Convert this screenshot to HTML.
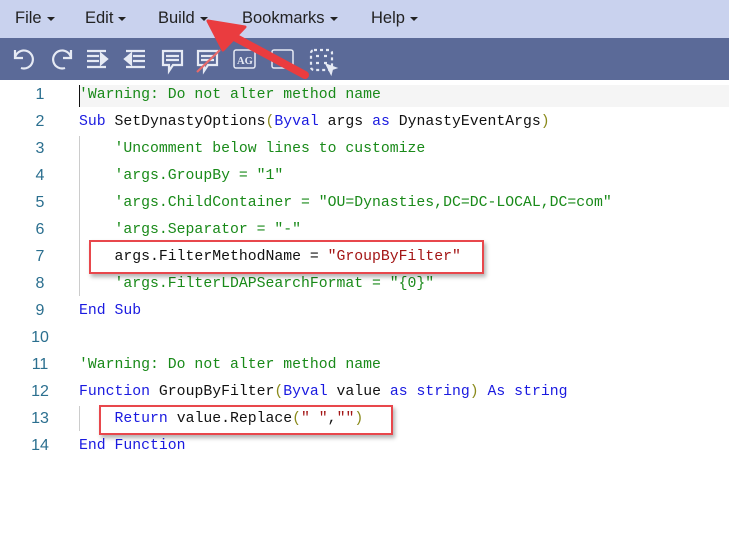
<!DOCTYPE html>
<html><head><style>
body{margin:0;width:729px;height:552px;background:#fff;position:relative;overflow:hidden;font-family:"Liberation Sans",sans-serif}
.menu{position:absolute;left:0;top:0;width:729px;height:38px;background:#c9d2ee}
.menu span{position:absolute;top:9px;font-size:16.5px;color:#222}
.menu span:after{content:"";display:inline-block;margin-left:5px;vertical-align:middle;border-left:4px solid transparent;border-right:4px solid transparent;border-top:4px solid #222}
.tb{position:absolute;left:0;top:38px;width:729px;height:42px;background:#5b6a98}
.code{position:absolute;left:0;top:81px;font-family:"Liberation Mono",monospace;font-size:14.8px}
.ln{position:absolute;left:0;width:80px;text-align:center;color:#2b6f8f;font-family:"Liberation Sans",sans-serif;font-size:16px}
.l{position:absolute;left:79px;white-space:pre;color:#111}
.c{color:#198a19}.k{color:#1a1ae0}.s{color:#a31515}.p{color:#8a8a1a}
.box{position:absolute;border:2.5px solid #e8474c;box-shadow:2px 3px 4px rgba(0,0,0,.3)}
</style></head><body>
<div class="menu"><span style="left:15px">File</span><span style="left:85px">Edit</span><span style="left:158px">Build</span><span style="left:242px">Bookmarks</span><span style="left:371px">Help</span></div>
<div class="tb">
<svg width="729" height="42" fill="none" stroke="#e6eaf4" stroke-width="2.2">
<path d="M15 12v8h8M15 20a9 9 0 1 1 6 10"/>
<path d="M71 12v8h-8M71 20a9 9 0 1 0-6 10"/>
<path d="M87 13h19M87 18h12M87 23h12M87 29h19M101 16l6 5-6 5z" fill="#e6eaf4"/>
<path d="M126 13h19M133 18h12M133 23h12M126 29h19M131 16l-6 5 6 5z" fill="#e6eaf4"/>
<path d="M163 13h19v14h-9l-4 6v-6h-6zM166 18h13M166 22h13"/>
<path d="M198 13h19v14h-9l-4 6v-6h-6zM201 18h13M201 22h13"/><path d="M197 34l23-22" stroke="#e86a6a"/>
<rect x="234" y="12" width="21" height="18" rx="2" stroke-width="1.5"/><text x="237" y="26" fill="#e6eaf4" stroke="none" font-size="10.5" font-family="Liberation Serif" font-weight="bold">AG</text>
<rect x="272" y="12" width="21" height="18" rx="2" stroke-width="1.5"/>
<rect x="311" y="12" width="21" height="20" rx="3" stroke-dasharray="3 3"/><path d="M316 18h3M324 18h3M316 25h3M324 25h3"/><path d="M327 27l8 3-3 1-1 4z" fill="#e6eaf4"/>
</svg></div>
<div class="code">
<div class="ln" style="top:5px">1</div><div class="ln" style="top:32px">2</div><div class="ln" style="top:59px">3</div><div class="ln" style="top:86px">4</div><div class="ln" style="top:113px">5</div><div class="ln" style="top:140px">6</div><div class="ln" style="top:167px">7</div><div class="ln" style="top:194px">8</div><div class="ln" style="top:221px">9</div><div class="ln" style="top:248px">10</div><div class="ln" style="top:275px">11</div><div class="ln" style="top:302px">12</div><div class="ln" style="top:329px">13</div><div class="ln" style="top:356px">14</div>
<div style="position:absolute;left:79px;top:4px;width:2px;height:22px;background:#111"></div>
<div style="position:absolute;left:80px;top:4px;width:650px;height:22px;background:#f5f5f5"></div>
<div style="position:absolute;left:79px;top:55px;width:1px;height:160px;background:#ccc"></div>
<div style="position:absolute;left:79px;top:325px;width:1px;height:25px;background:#ccc"></div>
<div class="l c" style="top:6px">'Warning: Do not alter method name</div>
<div class="l" style="top:33px"><span class="k">Sub</span> SetDynastyOptions<span class="p">(</span><span class="k">Byval</span> args <span class="k">as</span> DynastyEventArgs<span class="p">)</span></div>
<div class="l c" style="top:60px">    'Uncomment below lines to customize</div>
<div class="l c" style="top:87px">    'args.GroupBy = "1"</div>
<div class="l c" style="top:114px">    'args.ChildContainer = "OU=Dynasties,DC=DC-LOCAL,DC=com"</div>
<div class="l c" style="top:141px">    'args.Separator = "-"</div>
<div class="l" style="top:168px">    args.FilterMethodName = <span class="s">"GroupByFilter"</span></div>
<div class="l c" style="top:195px">    'args.FilterLDAPSearchFormat = "{0}"</div>
<div class="l k" style="top:222px">End Sub</div>
<div class="l c" style="top:276px">'Warning: Do not alter method name</div>
<div class="l" style="top:303px"><span class="k">Function</span> GroupByFilter<span class="p">(</span><span class="k">Byval</span> value <span class="k">as string</span><span class="p">)</span> <span class="k">As string</span></div>
<div class="l" style="top:330px">    <span class="k">Return</span> value.Replace<span class="p">(</span><span class="s">" "</span>,<span class="s">""</span><span class="p">)</span></div>
<div class="l k" style="top:357px">End Function</div>
</div>
<div class="box" style="left:89px;top:240px;width:391px;height:30px"></div>
<div class="box" style="left:99px;top:405px;width:290px;height:26px"></div>
<svg style="position:absolute;left:0;top:0" width="729" height="120"><path d="M305 75L225 32" stroke="#ea3c3f" stroke-width="8" stroke-linecap="round"/><path d="M208 21L245 27L223 50Z" fill="#ea3c3f" stroke="#ea3c3f" stroke-width="3" stroke-linejoin="round"/></svg>
</body></html>
